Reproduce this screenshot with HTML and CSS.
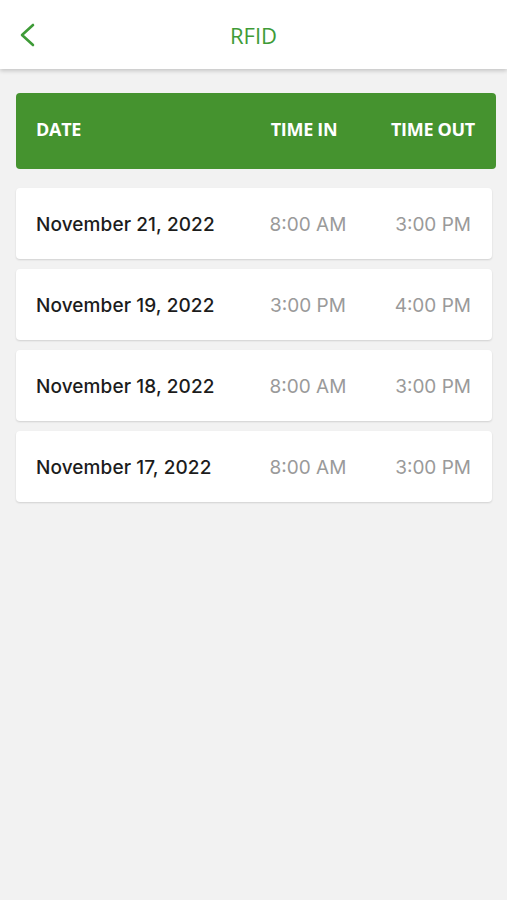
FILE: index.html
```html
<!DOCTYPE html>
<html lang="en">
<head>
  <meta charset="UTF-8">
  <title>RFID</title>
  <link rel="stylesheet" href="styles.css">
</head>
<body>

<header class="topbar">
  <button class="back" aria-label="Back">
    <svg width="16" height="24" viewBox="0 0 16 24">
      <path d="M14 2 L3 12 L14 22" fill="none" stroke="#3e9b37" stroke-width="2.6" stroke-linecap="round" stroke-linejoin="round"/>
    </svg>
  </button>
  <h1>RFID</h1>
</header>

<main class="content">
  <div class="table-head">
    <span>DATE</span>
    <span class="col-in">TIME IN</span>
    <span class="col-out">TIME OUT</span>
  </div>

  <div class="row">
    <span class="date">November 21, 2022</span>
    <span class="col-in">8:00 AM</span>
    <span class="col-out">3:00 PM</span>
  </div>
  <div class="row">
    <span class="date">November 19, 2022</span>
    <span class="col-in">3:00 PM</span>
    <span class="col-out">4:00 PM</span>
  </div>
  <div class="row">
    <span class="date">November 18, 2022</span>
    <span class="col-in">8:00 AM</span>
    <span class="col-out">3:00 PM</span>
  </div>
  <div class="row">
    <span class="date">November 17, 2022</span>
    <span class="col-in">8:00 AM</span>
    <span class="col-out">3:00 PM</span>
  </div>
</main>

</body>
</html>
```

FILE: styles.css
```css
body {
  margin: 0;
  background-color: #f2f2f2;
  font-family: "Open Sans", "Liberation Sans", sans-serif;
}

.topbar {
  position: relative;
  height: 69px;
  background-color: #fff;
  box-shadow: 0 2px 4px rgba(0, 0, 0, 0.18);
  display: flex;
  align-items: center;
  justify-content: center;
}

.topbar h1 {
  margin: 0;
  font-size: 22px;
  font-weight: 400;
  color: #3e9b37;
}

.back {
  position: absolute;
  left: 19px;
  top: 23px;
  padding: 0;
  border: none;
  background: none;
  cursor: pointer;
}

.content {
  padding: 24px 11px 24px 16px;
}

.table-head, .row {
  display: grid;
  align-items: center;
}

.table-head {
  grid-template-columns: 1fr 132px 105px;
  height: 71px;
  padding: 0 21px 5px 20px;
  margin-bottom: 19px;
  background-color: #45932f;
  border-radius: 4px;
  color: #fff;
  font-size: 18px;
  font-weight: 700;
  letter-spacing: -0.3px;
}

.row {
  grid-template-columns: 1fr 116px 105px;
  height: 70px;
  margin: 0 4px 10px 0;
  padding: 1px 21px 0 20px;
  background-color: #fff;
  border-radius: 4px;
  box-shadow: 0 1px 2px rgba(0, 0, 0, 0.14);
  font-family: Inter, "Open Sans", sans-serif;
  font-size: 19px;
}

.col-in {
  text-align: center;
}

.col-out {
  text-align: right;
}

.row .date {
  color: #1c1c1c;
  font-weight: 500;
  letter-spacing: 0.1px;
}

.row .col-in, .row .col-out {
  color: #9a9a9a;
}
```
